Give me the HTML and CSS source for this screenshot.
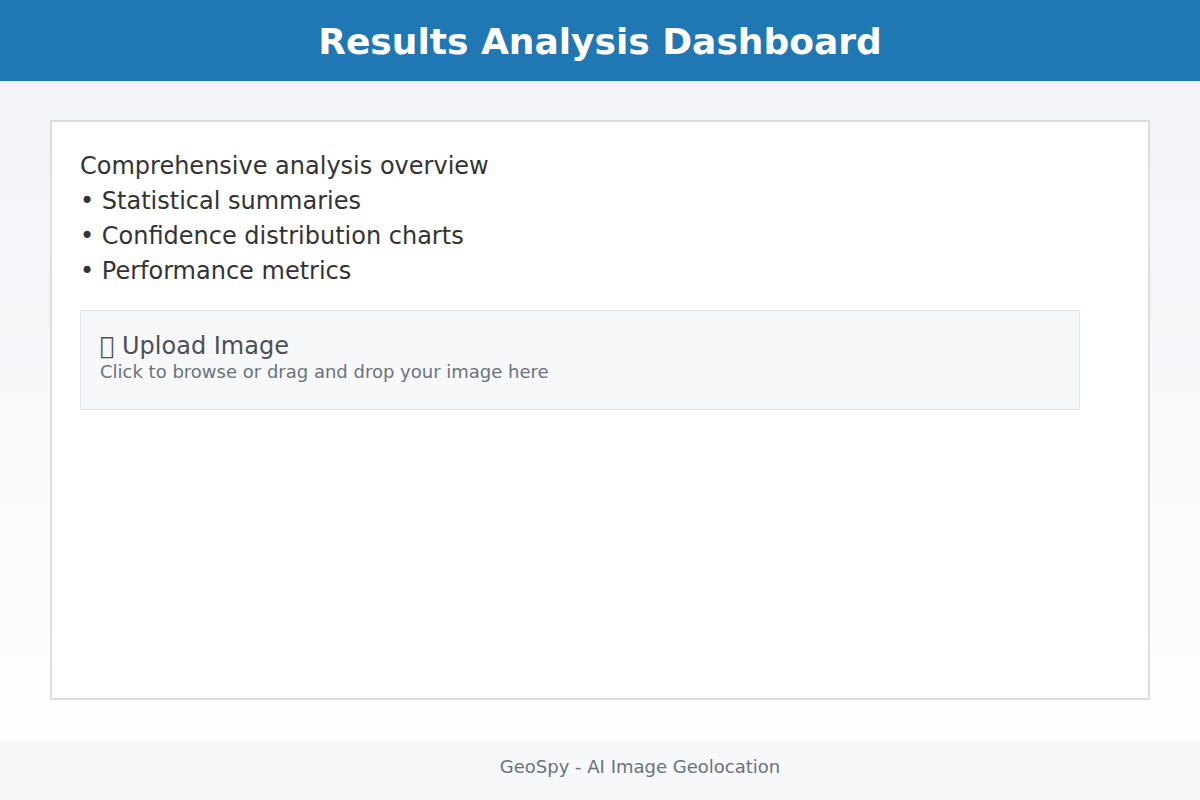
FILE: index.html
```html
<!DOCTYPE html>
<html lang="en">
<head>
<meta charset="utf-8">
<title>Results Analysis Dashboard</title>
<link rel="stylesheet" href="styles.css">
</head>
<body>
<div class="page">
  <header class="topbar">
    <h1 class="title">Results Analysis Dashboard</h1>
  </header>
  <main class="main">
    <section class="card">
      <div class="desc">
        <div class="line">Comprehensive analysis overview</div>
        <div class="line">• Statistical summaries</div>
        <div class="line">• Confidence distribution charts</div>
        <div class="line">• Performance metrics</div>
      </div>
      <div class="upload">
        <div class="upload-title">&#xE000; Upload Image</div>
        <div class="upload-sub">Click to browse or drag and drop your image here</div>
      </div>
    </section>
  </main>
  <footer class="footer">GeoSpy - AI Image Geolocation</footer>
</div>
</body>
</html>
```
FILE: styles.css
```css
html, body {
  margin: 0;
  padding: 0;
}
body {
  font-family: "DejaVu Sans", sans-serif;
  background: linear-gradient(to bottom, #f0f2f6 0%, #ffffff 100%);
  width: 1200px;
  height: 800px;
  overflow: hidden;
}
.page {
  display: flex;
  flex-direction: column;
  height: 800px;
}
.topbar {
  height: 81px;
  background: #1f77b4;
  display: flex;
  align-items: center;
  justify-content: center;
  flex: none;
}
.title {
  margin: 0;
  color: #ffffff;
  font-size: 36px;
  font-weight: bold;
  line-height: 1;
  padding-top: 2px;
}
.main {
  flex: 1;
  padding: 39px 50px 40px;
}
.card {
  box-sizing: border-box;
  height: 580px;
  background: #ffffff;
  border: 2px solid #dddddd;
  padding: 27px 28px;
}
.desc {
  color: #333333;
  font-size: 24px;
  line-height: 35px;
}
.upload {
  box-sizing: border-box;
  margin-top: 21px;
  width: 1000px;
  height: 100px;
  background: #f7f8fa;
  border: 1px solid #e1e4e8;
  padding: 20px 19px;
}
.upload-title {
  color: #4a5058;
  font-size: 24px;
  line-height: 30px;
}
.upload-sub {
  color: #6a737d;
  font-size: 18px;
  line-height: 22px;
}
.footer {
  flex: none;
  height: 60px;
  box-sizing: border-box;
  background: #f6f8fa;
  color: #6a737d;
  font-size: 18px;
  display: flex;
  align-items: center;
  justify-content: center;
  padding-left: 80px;
  padding-bottom: 8px;
}
```
